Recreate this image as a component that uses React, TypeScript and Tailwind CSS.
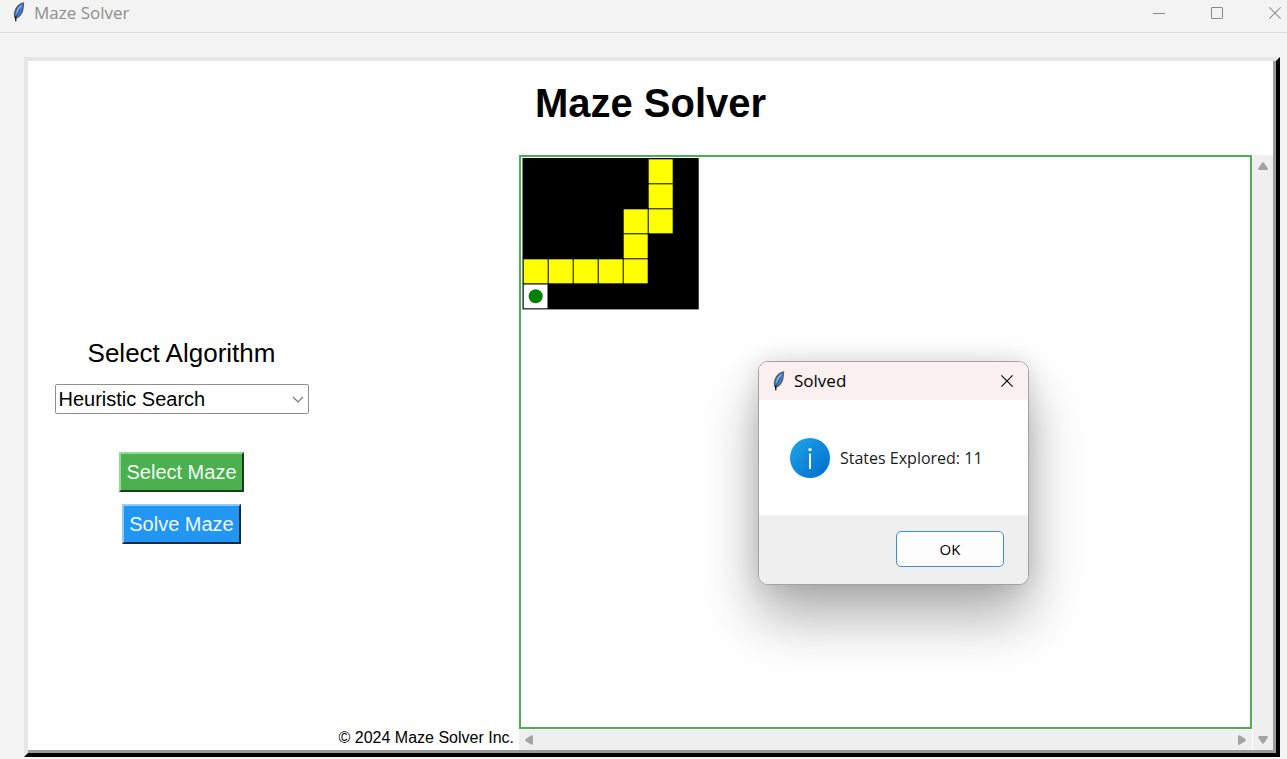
import { useState } from "react";

const CELL = 25;
const COLS = 7;
const ROWS = 6;

// [column, row] of every cell on the solved route
const PATH: [number, number][] = [
  [5, 0],
  [5, 1],
  [5, 2],
  [4, 2],
  [4, 3],
  [4, 4],
  [3, 4],
  [2, 4],
  [1, 4],
  [0, 4],
];

function Feather({ className }: { className?: string }) {
  return (
    <svg viewBox="0 0 14 20" className={className} aria-hidden="true">
      <path d="M12.200.2C8.800.4 5.400 2.800 3.400 6.600 1.800 9.800 1.400 13 2.400 16l2.200.8c3.400-1.600 6-4.800 6.800-8.800.5-2.600.6-5 .8-7.800z" fill="#55585e" />
      <path d="M11.200 1.400C8.600 2 6 4.400 4.500 7.400c-1.300 2.700-1.700 5-1.100 7.400l1.200.6c2.800-1.800 4.900-4.400 5.600-7.700.5-2.100.8-4 1-6.300z" fill="#3f7fd0" />
      <path d="M10 2.400C8 3.400 6.200 5.400 5 8c-.8 1.800-1 3.200-.9 4.600C5.800 10 8 6.800 10 2.400z" fill="#7fb0ec" />
      <path d="M8.400 6.500C7 10 5.200 12 4.300 15" stroke="#24405f" strokeWidth="0.700" fill="none" />
      <path d="M3.600 14.400L3.800 19.200" stroke="#1c1c1c" strokeWidth="1.400" fill="none" />
    </svg>
  );
}

function Cross({ className }: { className?: string }) {
  return (
    <svg viewBox="0 0 12 12" className={className} fill="none" stroke="currentColor" strokeWidth="1.100" aria-hidden="true">
      <path d="M.4.4l11.200 11.200M11.600.4L.4 11.600" />
    </svg>
  );
}

function Arrow({ className }: { className?: string }) {
  return (
    <svg viewBox="0 0 10 8" className={className} aria-hidden="true">
      <path d="M3.800.9Q5-.5 6.200.9L9.800 6.400Q10 8 8.600 8H1.400Q0 8 .2 6.400z" fill="#a3a3a3" />
    </svg>
  );
}

function Maze() {
  return (
    <svg width={COLS * CELL + 2} height={ROWS * CELL + 2} role="img" aria-label="Solved maze">
      <rect x="0.500" y="0" width={COLS * CELL + 1.2} height={ROWS * CELL + 1.4} fill="#000" />
      {PATH.map(([c, r]) => (
        <rect key={`${c}-${r}`} x={c * CELL + 1.7} y={r * CELL + 1.3} width="24" height="24" fill="#ff0" />
      ))}
      <rect x="1.700" y={5 * CELL + 1.5} width="23.800" height="23.800" fill="#fff" />
      <circle cx="13.700" cy={5 * CELL + 13.3} r="7" fill="#008000" />
    </svg>
  );
}

export default function App() {
  const [algorithm, setAlgorithm] = useState("Heuristic Search");
  const [open, setOpen] = useState(true);

  return (
    <div className="flex min-h-screen flex-col bg-[#f4f4f4] font-['Liberation_Sans',Arial,sans-serif] text-black">
      <header className="flex h-[33px] items-start border-b border-[#dadada] bg-[#f3f3f3] pl-3 text-[#8f8f8f]">
        <Feather className="mt-[2px] h-5 w-[14px]" />
        <span className="ml-2 flex-1 font-['Open_Sans','Noto_Sans',sans-serif] text-[17px] leading-[26px]">Maze Solver</span>
        <div className="flex h-[26px] items-center gap-[46px] pr-[6px]">
          <button aria-label="Minimize" className="flex h-3 w-3 items-center">
            <span className="h-px w-3 bg-[#8a8a8a]" />
          </button>
          <button aria-label="Maximize" className="h-3 w-3 rounded-[1px] border border-[#8a8a8a]" />
          <button aria-label="Close">
            <Cross className="h-3 w-3" />
          </button>
        </div>
      </header>

      <main className="flex flex-1 flex-col pt-6 pr-[7px] pb-[2px] pl-6">
        <div className="flex flex-1 flex-col border-4 border-t-[#e6e6e6] border-r-black border-b-black border-l-[#e6e6e6] bg-white">
          <div className="flex flex-1 flex-col border-r-[3px] border-b-[3px] border-[#999]">
            <h1 className="pt-5 pb-[30px] text-center text-[40px] leading-[44px] font-bold">Maze Solver</h1>
            <div className="flex flex-1">
              <section className="flex w-[491px] shrink-0">
                <div className="flex w-[307px] flex-col items-center pt-[182px]">
                  <label htmlFor="algorithm" className="text-[26px] leading-8">
                    Select Algorithm
                  </label>
                  <div className="relative mt-[15px] w-[254px]">
                    <select
                      id="algorithm"
                      value={algorithm}
                      onChange={(e) => setAlgorithm(e.target.value)}
                      className="h-[30px] w-full appearance-none rounded-[2px] border border-[#8f8f8f] bg-white pl-[3px] text-[20px] leading-7"
                    >
                      <option>Heuristic Search</option>
                      <option>Breadth-First Search</option>
                      <option>Depth-First Search</option>
                    </select>
                    <svg viewBox="0 0 12 7" className="pointer-events-none absolute top-3 right-[5px] h-[7px] w-3" fill="none" stroke="#777" strokeWidth="1.200" aria-hidden="true">
                      <path d="M1 1l5 5 5-5" />
                    </svg>
                  </div>
                  <button className="mt-[38px] h-10 border-2 border-t-[#8fdc93] border-r-[#1c3d1d] border-b-[#1c3d1d] border-l-[#8fdc93] bg-[#4caf50] px-[5px] text-[20px] text-[#f2faf2]">
                    Select Maze
                  </button>
                  <button className="mt-3 h-10 border-2 border-t-[#90caf9] border-r-[#0b2c47] border-b-[#0b2c47] border-l-[#90caf9] bg-[#2196f3] px-[5px] text-[20px] text-[#f0f8ff]">
                    Solve Maze
                  </button>
                </div>
                <footer className="flex flex-1 items-end justify-end pr-[5px] pb-[3px] text-[16px] leading-[18px] whitespace-nowrap">© 2024 Maze Solver Inc.</footer>
              </section>

              <section className="flex min-w-0 flex-1 flex-col">
                <div className="flex flex-1">
                  <div className="flex-1 border-2 border-[#4caf50] p-px">
                    <Maze />
                  </div>
                  <div className="ml-px flex w-5 flex-col items-center bg-[#efefef] pt-[7px]">
                    <Arrow className="h-2 w-[10px]" />
                  </div>
                </div>
                <div className="flex h-[21px] pt-px">
                  <div className="flex flex-1 items-center justify-between bg-[#efefef] px-[5px]">
                    <Arrow className="h-2 w-[10px] -rotate-90" />
                    <Arrow className="h-2 w-[10px] rotate-90" />
                  </div>
                  <div className="-mt-px ml-px flex w-5 items-center justify-center bg-[#efefef]">
                    <Arrow className="h-2 w-[10px] rotate-180" />
                  </div>
                </div>
              </section>
            </div>
          </div>
        </div>
      </main>

      {open && (
        <div
          role="dialog"
          aria-label="Solved"
          className="absolute top-[361px] left-[758px] w-[271px] overflow-hidden rounded-[10px] border border-[#a3a3a3] bg-white font-['Open_Sans','Noto_Sans',sans-serif] shadow-[0_32px_56px_rgba(0,0,0,0.32),0_0_24px_rgba(0,0,0,0.12)]"
        >
          <div className="flex h-[38px] items-center bg-[#f9f0ef] pr-[15px] pl-[13px]">
            <Feather className="h-5 w-[14px]" />
            <span className="ml-2 flex-1 text-[17px]">Solved</span>
            <button aria-label="Close dialog" onClick={() => setOpen(false)}>
              <Cross className="h-3 w-3" />
            </button>
          </div>
          <div className="flex h-[115px] items-center gap-[10px] pl-[31px] text-[16px] text-[#1a1a1a]">
            <svg viewBox="0 0 40 40" className="h-10 w-10" aria-hidden="true">
              <defs>
                <linearGradient id="info" x1="0" y1="0" x2="1" y2="1">
                  <stop offset="0.100" stopColor="#1ba1e2" />
                  <stop offset="0.900" stopColor="#0470d2" />
                </linearGradient>
              </defs>
              <circle cx="20" cy="20" r="20" fill="url(#info)" />
              <circle cx="20" cy="11.600" r="1.700" fill="#fff" />
              <rect x="19" y="15.600" width="2" height="15.400" fill="#fff" />
            </svg>
            <p>States Explored: 11</p>
          </div>
          <div className="flex h-[69px] items-start justify-end bg-[#efefef] pt-4 pr-6">
            <button onClick={() => setOpen(false)} className="h-9 w-[108px] rounded-[5px] border border-[#3a8fdb] bg-[#fdfdfd] text-[15px]">
              OK
            </button>
          </div>
        </div>
      )}
    </div>
  );
}
